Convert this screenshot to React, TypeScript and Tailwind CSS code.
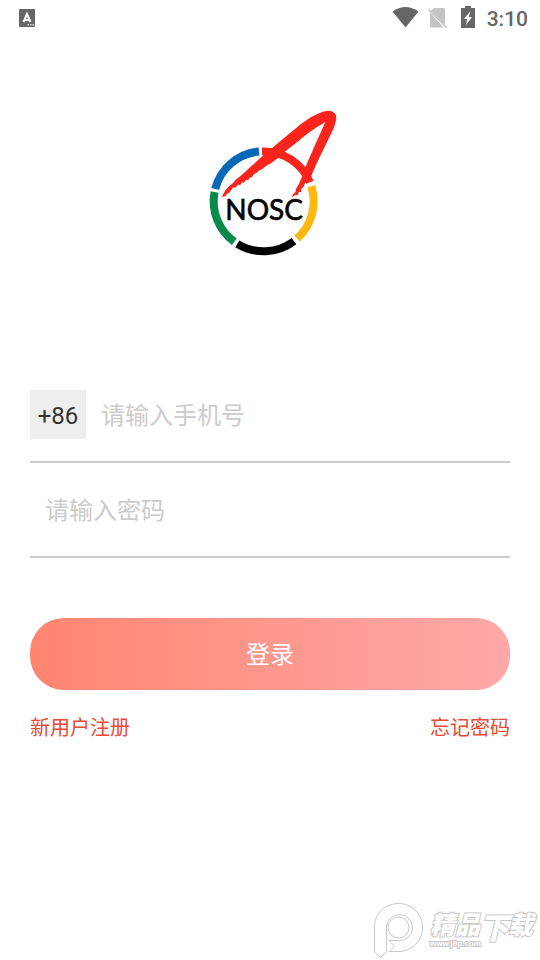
import React from 'react';

function StatusBar() {
  return (
    <header className="flex h-9 items-center justify-between pl-[19px] pr-3 text-[#666666]">
      <svg className="h-[18px] w-4" viewBox="0 0 16 18" aria-hidden="true">
        <rect width="16" height="18" rx="1" fill="#666" />
        <path d="M4.500 13 8 5l3.500 8M5.500 11h5" stroke="#fff" strokeWidth="2" fill="none" />
        <path d="M8.500 15h1.500v1.500H8.500zM11 15h1.500v1.500H11zM13.500 15H15v1.500h-1.500z" fill="#ddd" />
      </svg>
      <div className="flex items-center">
        <svg className="h-6 w-[92px]" viewBox="388 6 92 24" aria-hidden="true">
          <path d="M392.500 11.500Q405.500 2.500 418.500 11.500L405.500 27.500Z" fill="#666" />
          <path d="M434 8h9.500q1.500 0 1.500 1.500V24.500L430.500 11Z" fill="#c4c4c4" />
          <path d="M430 12.500V26q0 1.500 1.500 1.500h12Z" fill="#c4c4c4" />
          <path d="m428.500 9.500 18 18" stroke="#c4c4c4" strokeWidth="1.700" />
          <path d="M461 8h4V6h6v2h4v20h-14Z" fill="#666" />
          <path d="M470.500 11 464 19h3.200L466 25l6-8h-3.300Z" fill="#fff" />
        </svg>
        <time className="ml-[7px] pt-0.5 text-[21px] leading-6 font-medium">3:10</time>
      </div>
    </header>
  );
}

function Logo() {
  return (
    <svg className="mx-auto mt-16 h-40 w-[140px]" viewBox="0 0 420 480" role="img" aria-label="NOSC">
      <g fill="none" strokeWidth="24">
        <path d="M45.600 267A150 150 0 0 1 177.100 154.600" stroke="#0868b8" />
        <path d="M186 154.500A150 150 0 0 1 329.700 246.800" stroke="#f9251c" />
        <path d="M334 258.700A150 150 0 0 1 291.400 415.500" stroke="#fdb90d" />
        <path d="M281.900 423.300A150 150 0 0 1 112 431.500" stroke="#000" />
        <path d="M102.800 425.400A150 150 0 0 1 43.600 276.100" stroke="#078a4b" />
      </g>
      <path
        d="M65 291 76 271 85 260 100 248 106 240 125 225 152 200 180 175 193 164 220 141 253 113 275 95 300 74 332 52 360 38Q378 31 390 32Q410 36 409 55L406 70 400 87 380 128 362 165 349 193 337 220 329 243 315 249 311 260 305 265 303 276 296 276 294 285 285 286 276 292 278 284 286 276 289 265 297 251 304 235 310 218 315 205 325 181 336 156 348 128 361 100 376 66 352 80 320 103 287 130 257 153 238 171 214 189 203 195 195 200 186 208 178 211 170 218 161 223 156 232 149 233 145 241 138 239 132 248 126 247 121 255 114 254 106 263 99 262 90 276 80 283 77 288Z"
        fill="#f9251c"
      />
      <text x="76" y="361" className="font-[Lato] text-[84px] font-normal" fill="#050505" stroke="#050505" strokeWidth="2">
        NOSC
      </text>
    </svg>
  );
}

function Watermark() {
  return (
    <svg className="absolute right-0 bottom-0 h-[70px] w-[180px]" viewBox="0 0 180 70" role="img" aria-label="精品下载 www.j9p.com">
      <g fill="#fff" stroke="#c8c8c8" strokeWidth="1">
        <path d="M14.500 62V37.500C14.500 23 25 13.500 38.500 13.500S62.500 24 62.500 37.500 52 61.500 38.500 61.500H29L34.500 56 29 50.500h9.500a13 13 0 1 0-12-13V62l-6 5.500Z" />
        <circle cx="38.500" cy="37.500" r="10.500" />
      </g>
      <g fill="#fff" stroke="#c8c8c8" strokeWidth="2">
        <text x="70" y="44" className="font-['Noto_Sans_CJK_SC',sans-serif] text-[25px] font-black italic [paint-order:stroke]">
          精品
        </text>
        <text x="119" y="49" className="font-['Noto_Sans_CJK_SC',sans-serif] text-[30px] font-black italic [paint-order:stroke]">
          下
        </text>
        <text x="148" y="44" className="font-['Noto_Sans_CJK_SC',sans-serif] text-[25px] font-black italic [paint-order:stroke]">
          载
        </text>
        <text x="70" y="56" className="font-['Liberation_Sans',sans-serif] text-[8px] font-bold [paint-order:stroke]">
          www.j9p.com
        </text>
      </g>
    </svg>
  );
}

export default function App() {
  const field =
    'min-w-0 flex-1 bg-transparent px-[15px] pt-0.5 text-2xl text-[#333333] outline-none placeholder:text-[#cccccc]';
  return (
    <div className="relative min-h-screen bg-white font-[Roboto,'Noto_Sans_CJK_SC',sans-serif]">
      <StatusBar />
      <main>
        <Logo />
        <form className="mx-[30px] mt-[108px]" onSubmit={(e) => e.preventDefault()}>
          <div className="flex h-[95px] items-center border-b-2 border-[#cccccc]">
            <button type="button" aria-label="+86" className="h-[49px] w-14 bg-[#eeeeee] pt-0.5 text-2xl text-[#333333]">
              +86
            </button>
            <input type="tel" aria-label="请输入手机号" placeholder="请输入手机号" className={field} />
          </div>
          <div className="flex h-[95px] items-center border-b-2 border-[#cccccc]">
            <input type="password" aria-label="请输入密码" placeholder="请输入密码" className={field} />
          </div>
          <button
            type="submit"
            className="mt-[60px] h-[72px] w-full rounded-[34px] bg-linear-to-r from-[#ff8570] to-[#fda8a8] pt-0.5 text-2xl text-white"
          >
            登录
          </button>
          <nav className="mt-6 flex justify-between text-xl leading-7 text-[#e64a33]">
            <a href="#register">新用户注册</a>
            <a href="#forgot">忘记密码</a>
          </nav>
        </form>
      </main>
      <Watermark />
    </div>
  );
}
